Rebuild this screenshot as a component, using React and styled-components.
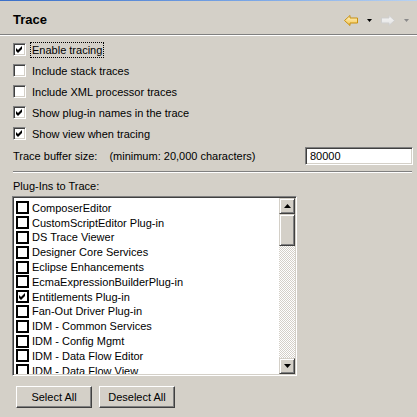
import React from "react"
import styled, { createGlobalStyle } from "styled-components"

const GlobalStyle = createGlobalStyle`
  html, body {
    margin: 0;
    padding: 0;
    background: #d4d0c8;
  }
  * { box-sizing: border-box; }
`

const Panel = styled.div`
  width: 417px;
  height: 417px;
  overflow: hidden;
  background: #d4d0c8;
  font-family: "Liberation Sans", Arial, sans-serif;
  font-size: 11px;
  color: #000;
  display: flex;
  flex-direction: column;
`

const TopStripe = styled.div`
  height: 1px;
  background: linear-gradient(to right, #3b6fc8, #7aa6e6 60%, #b8d2f2);
`

/* ---- HEADER ---- */
const Header = styled.div`
  height: 34px;
  padding: 5px 0 0 13px;
  display: flex;
  align-items: center;
  border-bottom: 1px solid #808080;
  box-shadow: 0 1px 0 #ffffff;
`

const Title = styled.h1`
  margin: 0;
  font-size: 13px;
  font-weight: bold;
  line-height: 16px;
`

const Toolbar = styled.div`
  margin-left: auto;
  padding-right: 8px;
  display: flex;
  align-items: center;
`

const ToolIcon = styled.span`
  display: flex;
  margin-right: ${p => p.gap || 0}px;
`

/* ---- OPTIONS ---- */
const Options = styled.div`
  padding-top: 4px;
  display: flex;
  flex-direction: column;
`

const CheckRow = styled.label`
  height: 21px;
  padding-left: 13px;
  display: flex;
  align-items: center;
`

const SunkenBox = styled.span`
  width: 13px;
  height: 13px;
  margin-right: 4px;
  background: #fff;
  border-top: 1px solid #808080;
  border-left: 1px solid #808080;
  border-bottom: 1px solid #fff;
  border-right: 1px solid #fff;
  box-shadow: inset 1px 1px 0 #404040, inset -1px -1px 0 #d4d0c8;
  display: flex;
  align-items: center;
  justify-content: center;
`

const CheckText = styled.span`
  line-height: 14px;
  padding: 0 1px;
  border: 1px dotted ${p => (p.focused ? "#000" : "transparent")};
`

const BufferRow = styled.div`
  height: 22px;
  margin-top: 1px;
  padding: 0 4px 0 13px;
  display: flex;
  align-items: center;
`

const Hint = styled.span`
  margin-left: 12px;
`

const TextInput = styled.div`
  margin-left: auto;
  width: 108px;
  height: 18px;
  padding-left: 4px;
  background: #fff;
  border-top: 1px solid #808080;
  border-left: 1px solid #808080;
  border-bottom: 1px solid #fff;
  border-right: 1px solid #fff;
  box-shadow: inset 1px 1px 0 #404040, inset -1px -1px 0 #d4d0c8;
  display: flex;
  align-items: center;
`

const Separator = styled.div`
  height: 2px;
  margin: 4px 5px 0 13px;
  border-top: 1px solid #808080;
  border-bottom: 1px solid #fff;
`

const SectionLabel = styled.div`
  margin: 6px 0 0 13px;
  line-height: 14px;
`

/* ---- PLUG-IN LIST ---- */
const ListBox = styled.div`
  margin: 3px 0 0 12px;
  width: 285px;
  height: 180px;
  display: flex;
  border-top: 1px solid #808080;
  border-left: 1px solid #808080;
  border-bottom: 1px solid #fff;
  border-right: 1px solid #fff;
  box-shadow: inset 1px 1px 0 #404040, inset -1px -1px 0 #d4d0c8;
  padding: 1px;
`

const Items = styled.div`
  flex: 1;
  background: #fff;
  overflow: hidden;
  padding-top: 2.5px;
`

const Item = styled.div`
  height: 14.8px;
  padding-left: 2px;
  display: flex;
  align-items: center;
  white-space: nowrap;
`

const FlatBox = styled.span`
  flex: none;
  width: 13px;
  height: 13px;
  margin-right: 3px;
  border: 2px solid #000;
  background: #fff;
  display: flex;
  align-items: center;
  justify-content: center;
`

const ScrollBar = styled.div`
  width: 16px;
  display: flex;
  flex-direction: column;
`

const Raised = styled.div`
  background: #d4d0c8;
  border-top: 1px solid #d4d0c8;
  border-left: 1px solid #d4d0c8;
  border-bottom: 1px solid #404040;
  border-right: 1px solid #404040;
  box-shadow: inset 1px 1px 0 #fff, inset -1px -1px 0 #808080;
`

const ScrollButton = styled(Raised)`
  height: 16px;
  display: flex;
  align-items: center;
  justify-content: center;
`

const Thumb = styled(Raised)`
  height: 32px;
`

const Track = styled.div`
  flex: 1;
  background: repeating-conic-gradient(#d4d0c8 0 25%, #ffffff 0 50%) 0 0 / 2px 2px;
`

/* ---- BUTTONS ---- */
const ButtonRow = styled.div`
  margin-top: 10px;
  padding-left: 16px;
  display: flex;
  gap: 7px;
`

const PushButton = styled.button`
  width: 76px;
  height: 22px;
  padding: 0;
  font-family: inherit;
  font-size: 11px;
  color: #000;
  background: #d4d0c8;
  border-top: 1px solid #fff;
  border-left: 1px solid #fff;
  border-bottom: 1px solid #404040;
  border-right: 1px solid #404040;
  box-shadow: inset -1px -1px 0 #808080;
`

const Check = () => (
  <svg width="7" height="7" viewBox="0 0 7 7">
    <path d="M0 2 L2 4 L6 0 L6 3 L2 7 L0 5 Z" fill="#000" />
  </svg>
)

const Arrow = ({ back, fill, stroke }) => (
  <svg width="14" height="11" viewBox="0 0 14 11" style={back ? undefined : { transform: "scaleX(-1)" }}>
    <defs>
      <linearGradient id={back ? "ag1" : "ag2"} x1="0" y1="0" x2="0" y2="1">
        <stop offset="0" stopColor={fill[0]} />
        <stop offset="1" stopColor={fill[1]} />
      </linearGradient>
    </defs>
    <path d="M0.5 5.5 L6 0.5 L6 3 L13.5 3 L13.5 8 L6 8 L6 10.5 Z" fill={`url(#${back ? "ag1" : "ag2"})`} stroke={stroke} />
  </svg>
)

const DropTri = ({ color }) => (
  <svg width="5" height="3" viewBox="0 0 5 3">
    <path d="M0 0 H5 L2.5 3 Z" fill={color} />
  </svg>
)

const options = [
  { label: "Enable tracing", checked: true, focused: true },
  { label: "Include stack traces", checked: false },
  { label: "Include XML processor traces", checked: false },
  { label: "Show plug-in names in the trace", checked: true },
  { label: "Show view when tracing", checked: true },
]

const plugins = [
  "ComposerEditor",
  "CustomScriptEditor Plug-in",
  "DS Trace Viewer",
  "Designer Core Services",
  "Eclipse Enhancements",
  "EcmaExpressionBuilderPlug-in",
  "Entitlements Plug-in",
  "Fan-Out Driver Plug-in",
  "IDM - Common Services",
  "IDM - Config Mgmt",
  "IDM - Data Flow Editor",
  "IDM - Data Flow View",
]
const checkedPlugins = ["Entitlements Plug-in"]

const App = () => {
  return (
    <Panel>
      <GlobalStyle />
      <TopStripe />
      <Header>
        <Title>Trace</Title>
        <Toolbar>
          <ToolIcon gap={9}>
            <Arrow back fill={["#fff6cc", "#f4c24a"]} stroke="#c8900e" />
          </ToolIcon>
          <ToolIcon gap={9}>
            <DropTri color="#000" />
          </ToolIcon>
          <ToolIcon gap={9}>
            <Arrow fill={["#f6f6f6", "#e2e2e2"]} stroke="#cfcfcf" />
          </ToolIcon>
          <ToolIcon>
            <DropTri color="#8a8a8a" />
          </ToolIcon>
        </Toolbar>
      </Header>

      <Options>
        {options.map(o => (
          <CheckRow key={o.label}>
            <SunkenBox>{o.checked && <Check />}</SunkenBox>
            <CheckText focused={o.focused}>{o.label}</CheckText>
          </CheckRow>
        ))}
      </Options>

      <BufferRow>
        <span>Trace buffer size:</span>
        <Hint>(minimum: 20,000 characters)</Hint>
        <TextInput>80000</TextInput>
      </BufferRow>
      <Separator />

      <SectionLabel>Plug-Ins to Trace:</SectionLabel>
      <ListBox>
        <Items>
          {plugins.map(p => (
            <Item key={p}>
              <FlatBox>{checkedPlugins.includes(p) && <Check />}</FlatBox>
              {p}
            </Item>
          ))}
        </Items>
        <ScrollBar>
          <ScrollButton>
            <svg width="7" height="4" viewBox="0 0 7 4"><path d="M3.5 0 L7 4 H0 Z" fill="#000" /></svg>
          </ScrollButton>
          <Thumb />
          <Track />
          <ScrollButton>
            <svg width="7" height="4" viewBox="0 0 7 4"><path d="M0 0 H7 L3.5 4 Z" fill="#000" /></svg>
          </ScrollButton>
        </ScrollBar>
      </ListBox>

      <ButtonRow>
        <PushButton>Select All</PushButton>
        <PushButton>Deselect All</PushButton>
      </ButtonRow>
    </Panel>
  )
}

export default App
